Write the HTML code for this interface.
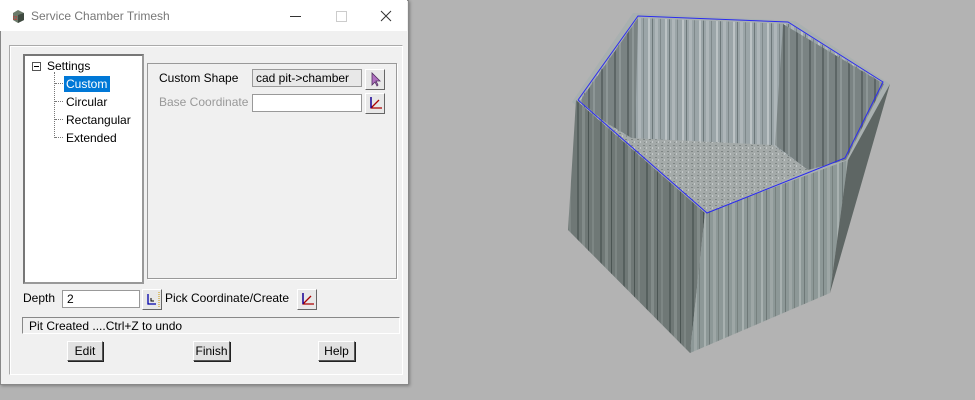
<!DOCTYPE html>
<html><head><style>
body{margin:0;width:975px;height:400px;background:#b3b3b3;position:relative;overflow:hidden;font-family:"Liberation Sans",sans-serif;font-size:12px;color:#000}
.a{position:absolute}
.win{left:0;top:0;width:409px;height:385px;background:#f0f0f0;border:1px solid #888;box-sizing:border-box;box-shadow:1px 1px 3px rgba(0,0,0,.3)}
.title{left:0;top:0;width:407px;height:31px;background:#fff}
.btn{background:#e1e1e1;border:1px solid;border-color:#fff #555 #555 #fff;box-shadow:1px 1px 0 #222;text-align:center;line-height:18px;height:18px}
.ib{width:18px;height:19px;background:#e8e8e8;border:1px solid;border-color:#fff #666 #666 #fff}
</style></head><body>
<div class="a win"></div>
<div class="a title"></div>
<svg class="a" style="left:11px;top:9px" width="14" height="14"><path d="M2 4 L7 1 L13 4 L13 11 L7 14 L2 11Z" fill="#6c7a6a"/><path d="M7 6 L13 4 L13 11 L7 14Z" fill="#3f4a40"/><text x="2" y="11" font-size="6" fill="#c33">tz</text></svg>
<div class="a" style="left:31px;top:9px;color:#777;font-size:12px">Service Chamber Trimesh</div>
<div class="a" style="left:290px;top:16px;width:11px;height:1px;background:#333"></div>
<div class="a" style="left:336px;top:11px;width:9px;height:9px;border:1px solid #ccc"></div>
<svg class="a" style="left:380px;top:10px" width="12" height="12"><path d="M1 1L11 11M11 1L1 11" stroke="#333" stroke-width="1"/></svg>
<div class="a" style="left:9px;top:45px;width:392px;height:328px;border:1px solid #aaa;border-right-color:#fff;border-bottom-color:#fff;box-shadow:inset 1px 1px 0 #fff"></div>
<div class="a" style="left:23px;top:54px;width:117px;height:226px;background:#fff;border:2px solid;border-color:#777 #999 #999 #777"></div>
<div class="a" style="left:32px;top:62px;width:7px;height:7px;border:1px solid #555;background:#fff"></div>
<div class="a" style="left:34px;top:66px;width:5px;height:1px;background:#000"></div>
<div class="a" style="left:47px;top:59px">Settings</div>
<div class="a" style="left:54px;top:72px;width:0;height:66px;border-left:1px dotted #777"></div>
<div class="a" style="left:55px;top:83px;width:8px;border-top:1px dotted #777"></div>
<div class="a" style="left:55px;top:101px;width:8px;border-top:1px dotted #777"></div>
<div class="a" style="left:55px;top:119px;width:8px;border-top:1px dotted #777"></div>
<div class="a" style="left:55px;top:137px;width:8px;border-top:1px dotted #777"></div>
<div class="a" style="left:64px;top:76px;height:16px;width:44px;background:#0078d7;color:#fff;padding-left:2px;line-height:16px">Custom</div>
<div class="a" style="left:66px;top:95px">Circular</div>
<div class="a" style="left:66px;top:113px">Rectangular</div>
<div class="a" style="left:66px;top:131px">Extended</div>
<div class="a" style="left:147px;top:63px;width:248px;height:214px;border:1px solid #999;box-shadow:1px 1px 0 #fff"></div>
<div class="a" style="left:159px;top:71px">Custom Shape</div>
<div class="a" style="left:159px;top:95px;color:#999">Base Coordinate</div>
<div class="a" style="left:252px;top:69px;width:110px;height:18px;background:#e8e8e8;border:1px solid #999;line-height:16px;padding-left:3px;box-sizing:border-box">cad pit-&gt;chamber</div>
<div class="a" style="left:252px;top:94px;width:110px;height:18px;background:#fff;border:1px solid #999;box-sizing:border-box"></div>
<div class="a ib" style="left:365px;top:69px"><svg width="18" height="18"><path d="M6 3 L6 15 L9 12 L11 16 L12 15 L10 11 L14 11Z" fill="#b070c0" stroke="#503060" stroke-width=".8"/></svg></div>
<div class="a ib" style="left:365px;top:93px"><svg width="18" height="18"><path d="M5 3V14H16M5 14L13 6" stroke="#a00" stroke-width="1.3" fill="none"/><path d="M5 3V14" stroke="#00a" stroke-width="1.3"/></svg></div>
<div class="a" style="left:23px;top:291px">Depth</div>
<div class="a" style="left:62px;top:290px;width:78px;height:18px;background:#fff;border:1px solid #999;box-sizing:border-box;padding-left:4px;line-height:16px">2</div>
<div class="a ib" style="left:142px;top:289px"><svg width="18" height="18"><path d="M5 4V14H13" stroke="#00a" stroke-width="1.3" fill="none"/><path d="M8 8V11H11" stroke="#000" fill="none"/><path d="M16 2V18" stroke="#c90" stroke-dasharray="1 1"/></svg></div>
<div class="a" style="left:165px;top:291px">Pick Coordinate/Create</div>
<div class="a ib" style="left:297px;top:289px"><svg width="18" height="18"><path d="M5 3V14H16M5 14L13 6" stroke="#a00" stroke-width="1.3" fill="none"/><path d="M5 3V14" stroke="#00a" stroke-width="1.3"/></svg></div>
<div class="a" style="left:22px;top:317px;width:378px;height:17px;border:1px solid;border-color:#888 #fff #fff #888;background:#f0f0f0;padding-left:6px;line-height:16px;box-sizing:border-box">Pit Created ....Ctrl+Z to undo</div>
<div class="a btn" style="left:67px;top:341px;width:34px">Edit</div>
<div class="a btn" style="left:193px;top:341px;width:35px">Finish</div>
<div class="a btn" style="left:318px;top:341px;width:35px">Help</div>
<svg class="a" style="left:0;top:0" width="975" height="400">
<defs>
<pattern id="s1" width="23" height="10" patternUnits="userSpaceOnUse"><rect width="23" height="10" fill="#6f7876"/><rect x="2" width="2" height="10" fill="#56605e"/><rect x="7" width="3" height="10" fill="#828b89"/><rect x="13" width="1" height="10" fill="#4b5553"/><rect x="17" width="2" height="10" fill="#7d8684"/></pattern>
<pattern id="s2" width="19" height="10" patternUnits="userSpaceOnUse"><rect width="19" height="10" fill="#8d9897"/><rect x="1" width="2" height="10" fill="#a8b1b0"/><rect x="6" width="1" height="10" fill="#6e7877"/><rect x="10" width="3" height="10" fill="#9ea7a6"/><rect x="15" width="1" height="10" fill="#77817f"/></pattern>
<pattern id="s3" width="17" height="10" patternUnits="userSpaceOnUse"><rect width="17" height="10" fill="#9ba5a8"/><rect x="2" width="2" height="10" fill="#bcc3c5"/><rect x="6" width="1" height="10" fill="#6d787a"/><rect x="9" width="3" height="10" fill="#aeb6b9"/><rect x="14" width="1" height="10" fill="#7f898b"/></pattern>
<pattern id="s4" width="13" height="10" patternUnits="userSpaceOnUse"><rect width="13" height="10" fill="#7a8383"/><rect x="3" width="2" height="10" fill="#5d6666"/><rect x="8" width="2" height="10" fill="#8d9696"/></pattern>
<pattern id="fl" width="6" height="6" patternUnits="userSpaceOnUse"><rect width="6" height="6" fill="#a4aaa9"/><rect x="1" y="1" width="2" height="1" fill="#7e8584"/><rect x="4" y="3" width="1" height="2" fill="#c3c8c8"/><rect x="2" y="4" width="1" height="1" fill="#868d8c"/></pattern>
</defs>
<polygon points="633,13 795,21 890,84 850,160 707,216 572,102" fill="#a9b0b0"/>
<polygon points="638,18 790,24 884,84 846,160 630,160 578,102" fill="url(#s3)"/>
<polygon points="580,101 638,18 635,140 605,122" fill="url(#s4)"/>
<polygon points="783,24 884,84 846,160 808,170 775,145" fill="url(#s4)"/>
<polygon points="630,138 773,145 808,170 707,213 598,118" fill="url(#fl)"/>
<polygon points="576,100 705,213 690,353 568,230" fill="url(#s1)"/>
<polygon points="705,213 848,160 830,293 690,353" fill="url(#s2)"/>
<polygon points="848,160 890,84 830,293" fill="#5e6664"/>
<polyline points="578,100 638,16 788,22 883,82 845,158 707,213 578,100" fill="none" stroke="#2a2af0" stroke-width="1"/>
</svg>
</body></html>
